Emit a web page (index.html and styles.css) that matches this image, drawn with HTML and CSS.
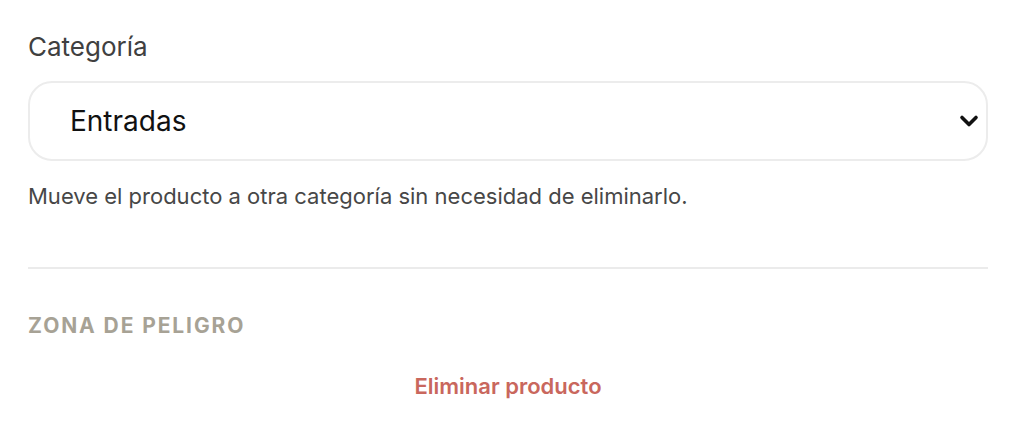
FILE: index.html
```html
<!DOCTYPE html>
<html lang="es">
<head>
  <meta charset="UTF-8" />
  <meta name="viewport" content="width=device-width, initial-scale=1.0" />
  <title>Editar producto</title>
  <link rel="stylesheet" href="styles.css">
</head>
<body>
  <div class="container">
    <div class="field">
      <label for="category">Categoría</label>
      <div class="select-wrap">
        <select id="category">
          <option>Entradas</option>
          <option>Principales</option>
          <option>Postres</option>
          <option>Bebidas</option>
        </select>
        <svg class="chevron" width="20" height="14" viewBox="0 0 20 14">
          <path d="M3 3.5 L10 10.5 L17 3.5" fill="none" stroke="#111" stroke-width="3.6" stroke-linecap="round" stroke-linejoin="round"/>
        </svg>
      </div>
      <p class="hint">Mueve el producto a otra categoría sin necesidad de eliminarlo.</p>
    </div>

    <hr class="divider" />

    <div class="danger">
      <h2>Zona de peligro</h2>
      <button class="delete-btn">Eliminar producto</button>
    </div>
  </div>
</body>
</html>
```

FILE: styles.css
```css
body {
  margin: 0;
  font-family: "Inter", "Noto Sans", sans-serif;
  background-color: #fff;
  color: #3d3d3d;
}

.container {
  padding: 29px 28px 0;
}

label {
  display: block;
  font-size: 26px;
  line-height: 36px;
  color: #404040;
  margin-bottom: 16px;
}

.select-wrap {
  position: relative;
}

select {
  display: block;
  width: 100%;
  height: 80px;
  padding: 0 60px 0 40px;
  font-family: inherit;
  font-size: 28px;
  color: #111;
  background-color: #fff;
  border: 2px solid #ececec;
  border-radius: 24px;
  appearance: none;
  -webkit-appearance: none;
  outline: none;
}

.chevron {
  position: absolute;
  right: 9px;
  top: 33px;
  pointer-events: none;
}

.hint {
  margin: 19px 0 0;
  font-size: 22px;
  line-height: 32px;
  color: #474747;
}

.divider {
  border: none;
  height: 2px;
  background-color: #ebebeb;
  margin: 55px 0 0;
}

.danger {
  padding-top: 42px;
}

.danger h2 {
  margin: 0;
  font-size: 21px;
  line-height: 30px;
  font-weight: 700;
  text-transform: uppercase;
  letter-spacing: 1.9px;
  color: #a7a295;
}

.delete-btn {
  display: block;
  margin: 30px auto 0;
  padding: 0;
  background: none;
  border: none;
  font-family: inherit;
  font-size: 22px;
  line-height: 30px;
  font-weight: 600;
  color: #c9675d;
  cursor: pointer;
}
```
